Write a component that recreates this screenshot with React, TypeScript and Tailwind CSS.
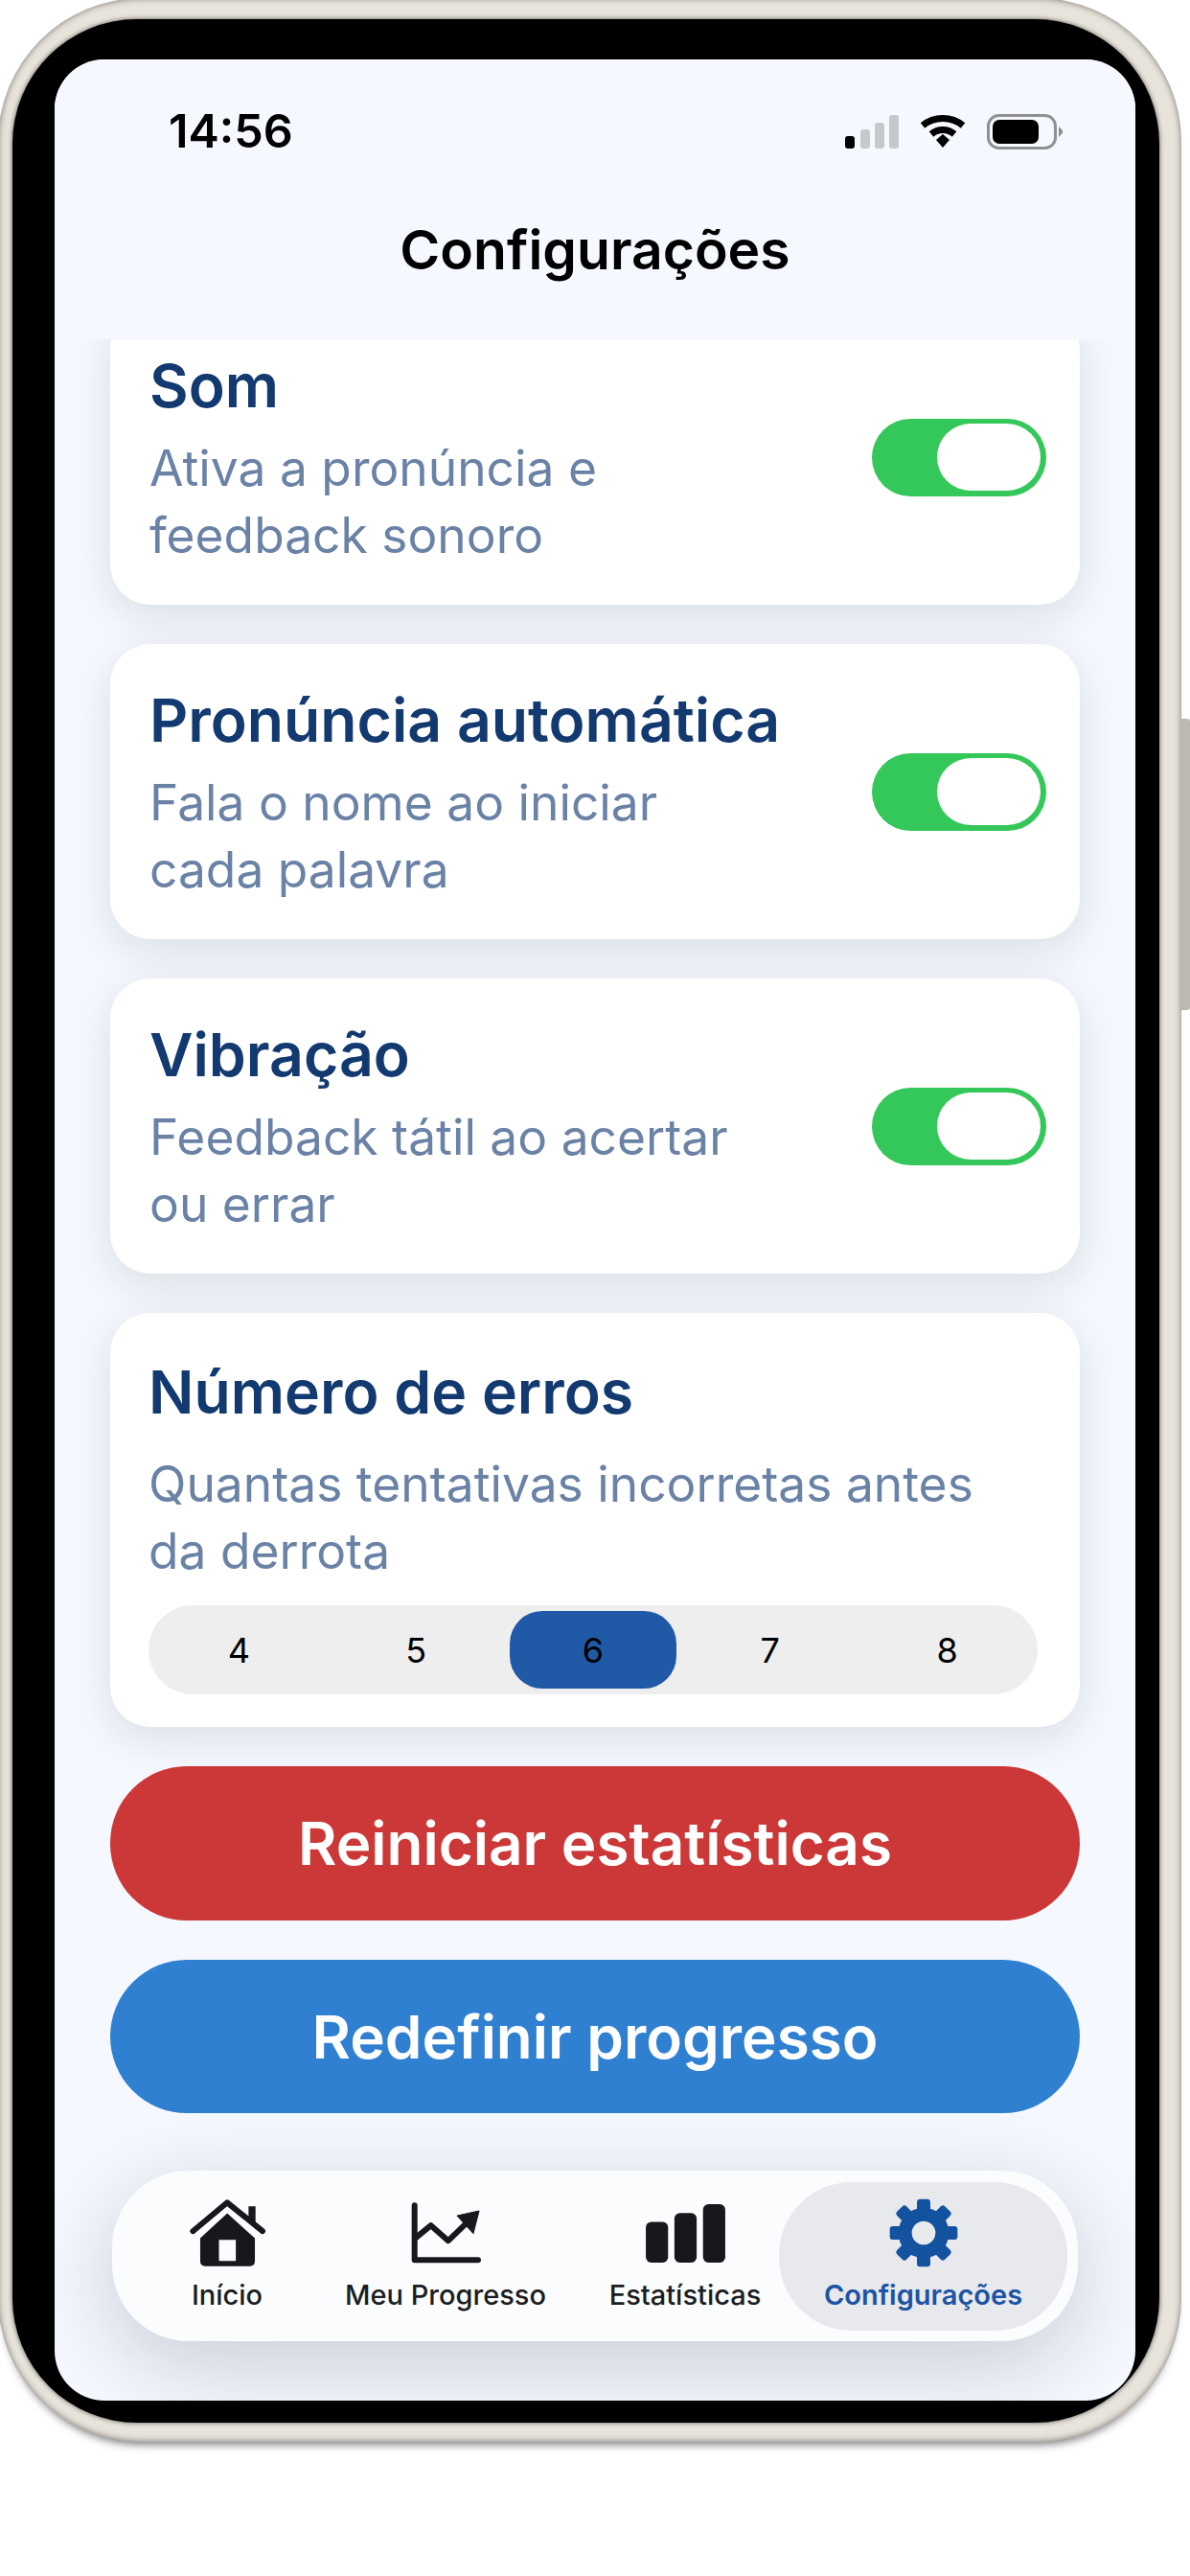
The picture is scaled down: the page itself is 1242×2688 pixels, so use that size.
const font = "font-['Inter','Noto_Sans',sans-serif]";

function Toggle() {
  return (
    <div className="flex h-[81px] w-[182px] shrink-0 items-center justify-end rounded-full bg-[#34c759] pr-[6px]">
      <div className="h-[70px] w-[108px] rounded-full bg-white" />
    </div>
  );
}

function SettingCard({ title, lines, first }: { title: string; lines: string[]; first?: boolean }) {
  return (
    <div
      className={`flex h-[308px] items-center justify-between rounded-[42px] bg-white pl-[41px] pr-[35px] shadow-[0_12px_44px_rgba(20,30,50,0.12)] ${
        first ? "-mt-[31px]" : ""
      }`}
    >
      <div className="pt-[1px]">
        <div className="mb-[11px] text-[62.5px] leading-[80px] font-semibold text-[#133a70]">{title}</div>
        {lines.map((line) => (
          <div key={line} className="text-[51.5px] leading-[70px] text-[#6a82a6]">
            {line}
          </div>
        ))}
      </div>
      <Toggle />
    </div>
  );
}

function HomeIcon() {
  return (
    <svg width="82" height="73" viewBox="40 25 245 220" fill="none">
      <path d="M55 128L163 38L274 128" stroke="#17181c" strokeWidth="18" strokeLinecap="round" strokeLinejoin="round" />
      <path d="M230 50H252V100L230 84Z" fill="#17181c" />
      <path
        fillRule="evenodd"
        d="M78 150L163 72L250 150V222Q250 238 234 238H94Q78 238 78 222ZM137 155V222H190V155Z"
        fill="#17181c"
      />
    </svg>
  );
}

function ChartIcon() {
  return (
    <svg width="77" height="67" viewBox="740 35 230 200" fill="none">
      <path d="M757 48V218H955" stroke="#17181c" strokeWidth="18" strokeLinecap="round" strokeLinejoin="round" />
      <path d="M757 152L808 110L862 158L920 102" stroke="#17181c" strokeWidth="18" strokeLinejoin="round" />
      <path d="M890 80L958 65L940 135Z" fill="#17181c" stroke="#17181c" strokeWidth="3" strokeLinejoin="round" />
    </svg>
  );
}

function BarsIcon() {
  return (
    <svg width="83" height="61" viewBox="37 42 250 184" fill="#17181c">
      <rect x="37" y="98" width="70" height="128" rx="17" />
      <rect x="127" y="70" width="70" height="156" rx="17" />
      <rect x="217" y="42" width="70" height="184" rx="17" />
    </svg>
  );
}

function GearIcon() {
  return (
    <svg width="72" height="72" viewBox="-108 -108 216 216" fill="#13529f">
      <circle r="58" fill="none" stroke="#13529f" strokeWidth="42" />
      {[0, 45, 90, 135, 180, 225, 270, 315].map((deg) => (
        <rect key={deg} x="-21" y="-106" width="42" height="50" rx="10" transform={`rotate(${deg})`} />
      ))}
    </svg>
  );
}

function StatusIcons() {
  return (
    <div className="flex items-center">
      <svg width="56" height="35" viewBox="0 0 56 35">
        <rect x="0" y="22" width="10" height="13" rx="3" fill="#000" />
        <rect x="16" y="15" width="10" height="20" rx="3" fill="#c5c9cc" />
        <rect x="31" y="8" width="10" height="27" rx="3" fill="#c5c9cc" />
        <rect x="46" y="0" width="10" height="35" rx="3" fill="#c5c9cc" />
      </svg>
      <svg className="ml-[22px]" width="48" height="36" viewBox="0 0 48 36" fill="none" stroke="#000">
        <path d="M3 12C15 2 33 2 45 12" strokeWidth="7" />
        <path d="M12 21C19 15 29 15 36 21" strokeWidth="7" />
        <path d="M17 27L24 21L31 27L24 35Z" fill="#000" stroke="none" />
      </svg>
      <svg className="ml-[22px]" width="79" height="37" viewBox="0 0 79 37">
        <rect x="1.5" y="1.5" width="70" height="34" rx="11" fill="none" stroke="#8f9091" strokeWidth="3" />
        <rect x="6" y="6" width="48" height="25" rx="7" fill="#000" />
        <path d="M75 13L79 17V20L75 24Z" fill="#8f9091" />
      </svg>
    </div>
  );
}

const tabs = [
  { label: "Início", icon: <HomeIcon />, cls: "w-[216px]" },
  { label: "Meu Progresso", icon: <ChartIcon />, cls: "w-[240px]" },
  { label: "Estatísticas", icon: <BarsIcon />, cls: "ml-[32px] w-[196px]" },
];

export default function App() {
  return (
    <div className={`h-[2688px] overflow-hidden bg-white ${font}`}>
      <div className="relative -mt-[2px] -ml-[2px] h-[2550px] w-[1235px] rounded-[150px] bg-[#e8e4dc] pt-[22px] pr-[23px] pb-[20px] pl-[15px] shadow-[inset_0_0_7px_#77746d,0_9px_9px_-6px_rgba(0,0,0,0.5)]">
        <div className="absolute top-[752px] -right-[9px] h-[304px] w-[9px] rounded-r-[3px] bg-[#bdb9b1]" />
        <div className="h-full rounded-[130px] bg-black pt-[42px] pr-[25px] pb-[23px] pl-[44px] shadow-[0_0_5px_#55534e]">
          <div className="flex h-full flex-col overflow-hidden rounded-[52px] bg-[#f5f8fe]">
            <header className="relative z-10 h-[292px] shrink-0 bg-[#f5f8fe]">
              <div className="flex items-center justify-between pt-[52px] pr-[76px] pl-[119px]">
                <span className="text-[48.5px] leading-[46px] font-semibold whitespace-nowrap text-black">14:56</span>
                <StatusIcons />
              </div>
              <h1 className="mt-[65px] text-center text-[57px] leading-[72px] font-semibold text-black">Configurações</h1>
            </header>
            <main className="flex flex-1 flex-col px-[58px]">
              <div className="flex flex-col gap-[41px]">
                <SettingCard first title="Som" lines={["Ativa a pronúncia e", "feedback sonoro"]} />
                <SettingCard title="Pronúncia automática" lines={["Fala o nome ao iniciar", "cada palavra"]} />
                <SettingCard title="Vibração" lines={["Feedback tátil ao acertar", "ou errar"]} />
                <div className="h-[432px] rounded-[42px] bg-white px-[40px] pt-[42px] shadow-[0_12px_44px_rgba(20,30,50,0.12)]">
                  <div className="text-[62.5px] leading-[80px] font-semibold text-[#133a70]">Número de erros</div>
                  <div className="mt-[21px] text-[51.5px] leading-[70px] text-[#6a82a6]">
                    Quantas tentativas incorretas antes
                    <br />
                    da derrota
                  </div>
                  <div className="mt-[22px] flex h-[93px] w-[928px] items-center rounded-full bg-[#eeeeee] px-[2px]">
                    {[4, 5, 6, 7, 8].map((n) => (
                      <div key={n} className="flex h-[81px] flex-1 items-center justify-center">
                        <span
                          className={`flex h-[81px] w-[174px] items-center justify-center rounded-[34px] text-[36px] text-black ${
                            n === 6 ? "bg-[#205aa7]" : ""
                          }`}
                        >
                          {n}
                        </span>
                      </div>
                    ))}
                  </div>
                </div>
              </div>
              <button className="mt-[41px] h-[161px] rounded-[80px] bg-[#cc3838] text-[62px] font-semibold text-white">
                Reiniciar estatísticas
              </button>
              <button className="mt-[41px] h-[160px] rounded-[80px] bg-[#3080d2] text-[62px] font-semibold text-white">
                Redefinir progresso
              </button>
              <nav className="mt-[60px] flex h-[178px] w-[1008px] items-center self-center rounded-[80px] bg-[#fbfcfe] pr-[11px] pl-[12px] shadow-[0_24px_90px_rgba(20,30,50,0.2)]">
                {tabs.map((tab) => (
                  <div key={tab.label} className={`flex flex-col items-center ${tab.cls}`}>
                    <div className="flex h-[70px] items-center">{tab.icon}</div>
                    <span className="mt-[12px] text-[29px] leading-[36px] font-medium whitespace-nowrap text-[#1c1d21]">
                      {tab.label}
                    </span>
                  </div>
                ))}
                <div className="flex h-[155px] w-[301px] flex-col items-center justify-center rounded-[76px] bg-[#e8e9ed]">
                  <div className="flex h-[70px] items-center">
                    <GearIcon />
                  </div>
                  <span className="mt-[12px] text-[29px] leading-[36px] font-semibold text-[#1c54a3]">Configurações</span>
                </div>
              </nav>
            </main>
          </div>
        </div>
      </div>
    </div>
  );
}
